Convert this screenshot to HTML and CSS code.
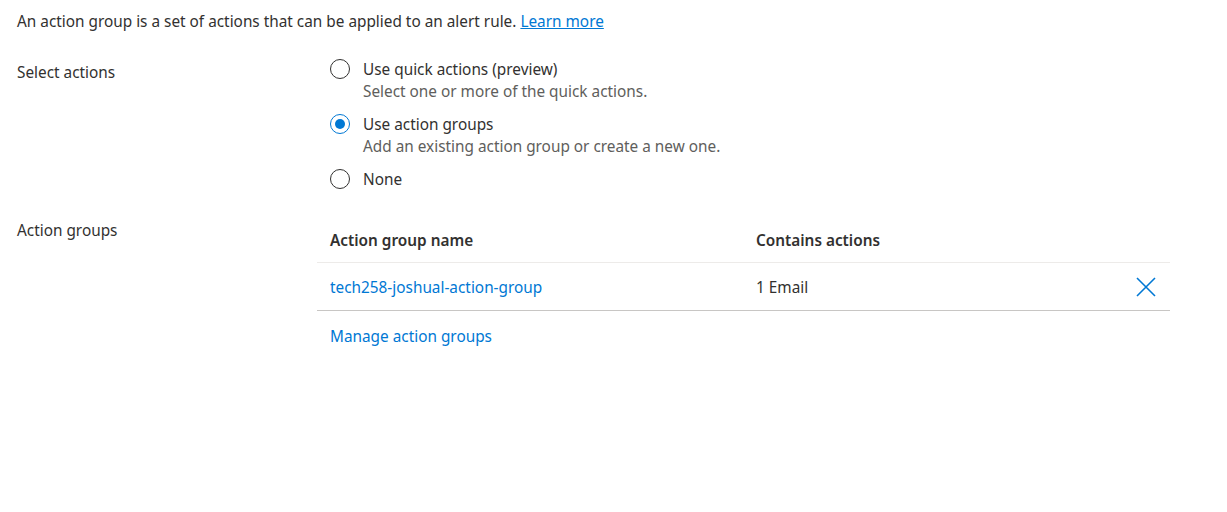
FILE: index.html
```html
<!DOCTYPE html>
<html lang="en">
<head>
<meta charset="utf-8">
<title>Actions</title>
<link rel="stylesheet" href="styles.css">
</head>
<body>
<div class="page">
  <p class="intro">An action group is a set of actions that can be applied to an alert rule. <a class="learn" href="#">Learn more</a></p>

  <div class="form-row first">
    <div class="label label-select">Select actions</div>
    <div class="content radios">
      <div class="option">
        <div class="opt-line"><span class="radio"></span><span class="opt-text">Use quick actions (preview)</span></div>
        <div class="opt-desc">Select one or more of the quick actions.</div>
      </div>
      <div class="option">
        <div class="opt-line"><span class="radio checked"></span><span class="opt-text">Use action groups</span></div>
        <div class="opt-desc">Add an existing action group or create a new one.</div>
      </div>
      <div class="option">
        <div class="opt-line"><span class="radio"></span><span class="opt-text">None</span></div>
      </div>
    </div>
  </div>

  <div class="form-row second">
    <div class="label">Action groups</div>
    <div class="content">
      <div class="table">
        <div class="trow head">
          <div class="cell c-name">Action group name</div>
          <div class="cell c-act">Contains actions</div>
          <div class="cell c-del"></div>
        </div>
        <div class="trow body">
          <div class="cell c-name"><a class="link" href="#">tech258-joshual-action-group</a></div>
          <div class="cell c-act">1 Email</div>
          <div class="cell c-del">
            <svg class="x" width="20" height="20" viewBox="0 0 20 20" aria-hidden="true"><path d="M1 1 L19 19 M19 1 L1 19" stroke="#0078d4" stroke-width="1.6" fill="none"/></svg>
          </div>
        </div>
      </div>
      <a class="link manage" href="#">Manage action groups</a>
    </div>
  </div>
</div>
</body>
</html>
```

FILE: styles.css
```css
* { box-sizing: border-box; }
html, body { margin: 0; padding: 0; background: #ffffff; }
body {
  font-family: "Noto Sans", "Open Sans", sans-serif;
  font-size: 15.35px;
  line-height: 20px;
  color: #323130;
}
.page { padding: 11px 0 0 17px; width: 1170px; }
.intro { margin: 0; }
.learn { color: #0078d4; text-decoration: underline; }
.form-row { display: grid; grid-template-columns: 300px 853px; }
.form-row.first { margin-top: 28px; }
.form-row.second { margin-top: 31px; }
.label-select { padding-top: 3px; }
.radios { padding-left: 13px; display: flex; flex-direction: column; gap: 13px; }
.opt-line { display: flex; align-items: center; gap: 13px; }
.radio {
  width: 20px; height: 20px; border-radius: 50%;
  border: 1px solid #323130; display: inline-flex;
  align-items: center; justify-content: center; flex: none;
}
.radio.checked { border-color: #0078d4; }
.radio.checked::after {
  content: ""; width: 10px; height: 10px; border-radius: 50%; background: #0078d4;
}
.opt-desc { padding-left: 33px; color: #605e5c; margin-top: 2px; }
.table { width: 853px; }
.trow { display: grid; grid-template-columns: 426px 1fr 60px; }
.trow.head { border-bottom: 1px solid #edebe9; }
.trow.head .cell { padding: 10px 13px 12px; font-weight: 600; }
.trow.body { border-bottom: 1px solid #c8c6c4; }
.trow.body .cell { padding: 14px 13px 13px; }
.c-del { display: flex; justify-content: flex-end; align-items: center; }
.trow.body .c-del { padding: 0 14px 0 0; }
.link { color: #0078d4; text-decoration: none; }
.manage { display: inline-block; margin: 15px 0 0 13px; }
```
